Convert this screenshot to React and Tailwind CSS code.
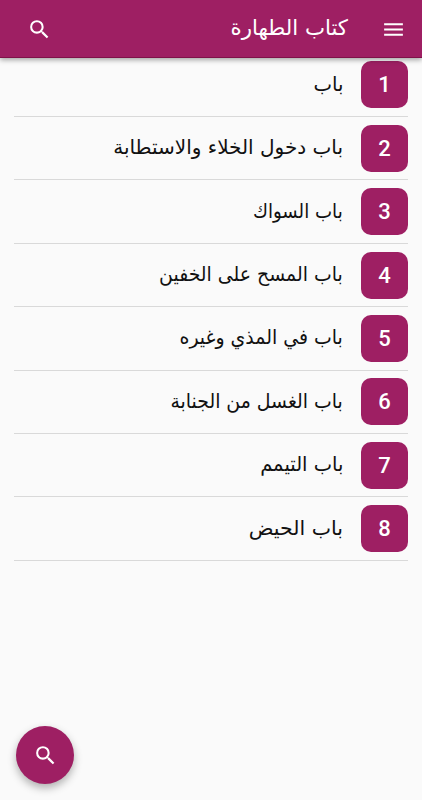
import { MdMenu, MdSearch } from "react-icons/md";

const chapters = [
  { id: 1, title: "باب", stretch: 0.985 },
  { id: 2, title: "باب دخول الخلاء والاستطابة", stretch: 1 },
  { id: 3, title: "باب السواك", stretch: 0.91 },
  { id: 4, title: "باب المسح على الخفين", stretch: 0.943 },
  { id: 5, title: "باب في المذي وغيره", stretch: 0.945 },
  { id: 6, title: "باب الغسل من الجنابة", stretch: 0.943 },
  { id: 7, title: "باب التيمم", stretch: 0.975 },
  { id: 8, title: "باب الحيض", stretch: 1.025 },
];

function Header() {
  return (
    <header className="relative z-10 h-[58px] pt-[2px] bg-[#9e1f63] text-white flex items-center pr-4 pl-[27px] border-b border-[#7f1149] shadow-[0_2px_5px_rgba(0,0,0,0.35)]">
      <button aria-label="القائمة">
        <MdMenu className="size-[25px]" />
      </button>
      <h1 className="mr-[33px] -mt-[3px] text-[21.3px] leading-8">كتاب الطهارة</h1>
      <button aria-label="بحث" className="mr-auto">
        <MdSearch className="size-[25px]" />
      </button>
    </header>
  );
}

function ChapterRow({ chapter }) {
  return (
    <li className="h-[63.4px] border-b border-[#d9d9d9] flex items-center">
      <span className="size-[47px] shrink-0 rounded-[10px] bg-[#9e1f63] text-white text-[22px] font-medium font-['Roboto',sans-serif] flex items-center justify-center">
        {chapter.id}
      </span>
      <span
        className="mr-[18px] -mt-[2px] text-[20px] leading-8 text-[#111] whitespace-nowrap origin-right"
        style={{ transform: `scaleX(${chapter.stretch})` }}
      >
        {chapter.title}
      </span>
    </li>
  );
}

export default function App() {
  return (
    <div
      dir="rtl"
      className="relative h-[800px] overflow-hidden bg-[#fafafa] font-['DejaVu_Sans',sans-serif]"
    >
      <Header />
      <ul className="px-[14px] -mt-[4.3px]">
        {chapters.map((c) => (
          <ChapterRow key={c.id} chapter={c} />
        ))}
      </ul>

      {/* Floating search */}
      <button
        aria-label="بحث"
        className="absolute left-4 bottom-[16px] size-[58px] rounded-full bg-[#9e1f63] text-white flex items-center justify-center shadow-[0_4px_8px_rgba(0,0,0,0.3)]"
      >
        <MdSearch className="size-[25px]" />
      </button>
    </div>
  );
}
